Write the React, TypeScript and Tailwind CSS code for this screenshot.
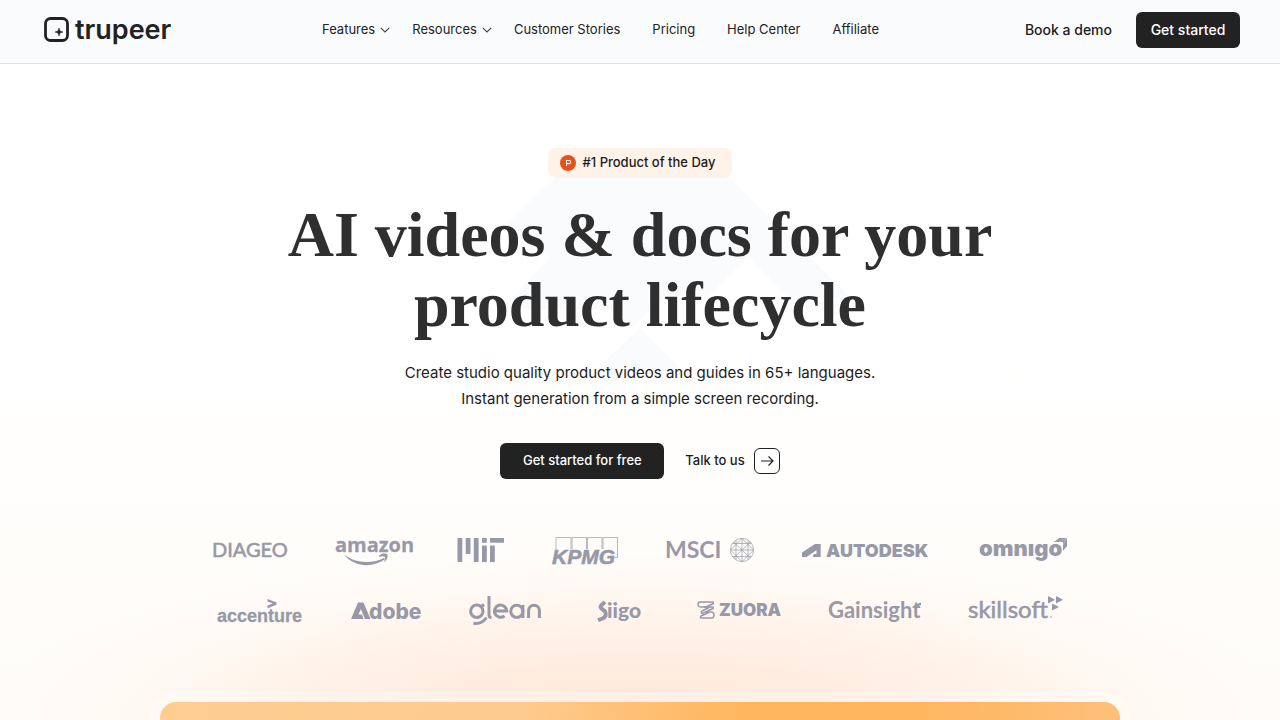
import React from 'react';

interface NavItem {
  label: string;
  hasMenu?: boolean;
}

const menuItems: NavItem[] = [
  { label: 'Features', hasMenu: true },
  { label: 'Resources', hasMenu: true },
  { label: 'Customer Stories' },
];

const linkItems: NavItem[] = [
  { label: 'Pricing' },
  { label: 'Help Center' },
  { label: 'Affiliate' },
];

const Chevron = () => (
  <svg width="10" height="6" viewBox="0 0 10 6" fill="none" stroke="#444" strokeWidth="1.1" aria-hidden="true">
    <path d="M0.8 0.8 L5 5 L9.2 0.8" />
  </svg>
);

const Header = () => (
  <header className="relative z-10 flex h-16 items-center border-b border-[#e0e2e6] bg-[#fafbfd] px-10 pb-1">
    <a href="#" className="ml-1 flex w-[278px] shrink-0 items-center gap-[6px]" aria-label="trupeer home">
      <svg width="25" height="25" viewBox="0 0 25 25" fill="none" aria-hidden="true">
        <rect x="1.5" y="1.5" width="22" height="22" rx="5" stroke="#222" strokeWidth="2.8" />
        <path d="M15 11 L16 14 L19 15 L16 16 L15 19 L14 16 L11 15 L14 14 Z" fill="#222" stroke="#222" strokeWidth="0.5" />
      </svg>
      <span className="text-[27px] leading-8 font-semibold text-[#222]">trupeer</span>
    </a>

    <nav className="flex items-center gap-8 text-[13px] whitespace-nowrap text-[#222]">
      <div className="flex items-center gap-[22px]">
        {menuItems.map((item) => (
          <a key={item.label} href="#" className="flex items-center gap-[5px]">
            {item.label}
            {item.hasMenu && <Chevron />}
          </a>
        ))}
      </div>
      {linkItems.map((item) => (
        <a key={item.label} href="#">{item.label}</a>
      ))}
    </nav>

    <div className="ml-auto flex items-center gap-6 text-[14px] font-medium">
      <a href="#" className="whitespace-nowrap text-[#1c1c1c]">Book a demo</a>
      <button className="h-9 w-[104px] rounded-md bg-[#222] text-white">Get started</button>
    </div>
  </header>
);

/* --- Logos --- */

const Logo = ({ name, width, children }: { name: string; width: number; children: React.ReactNode }) => (
  <svg
    width={width}
    height="34"
    viewBox={`0 0 ${width} 34`}
    className="shrink-0 overflow-visible"
    fill="#9799a8"
    role="img"
    aria-label={name}
  >
    {children}
  </svg>
);

const Diageo = () => (
  <Logo name="Diageo" width={75}>
    <text x="-1" y="24" fontFamily="Lato" fontSize="20" fontWeight="400" stroke="#9799a8" strokeWidth="0.6">DIAGEO</text>
  </Logo>
);

const Amazon = () => (
  <Logo name="Amazon" width={73}>
    <text x="-1" y="19" fontFamily="Open Sans" fontSize="20" fontWeight="700" stroke="#9799a8" strokeWidth="0.3">amazon</text>
    <path d="M8 21.5 C20 31 37 30.5 48 25 L49 26.3 C37 35 18 34.5 8 21.5 Z" />
    <path d="M43 22.5 C46 20 50 20 51.5 21.2 C52 24.5 50.5 27.5 48 29.5 C48.8 27 49.5 25 49 24 C48 23 45.5 23.2 43 23.8 Z" />
  </Logo>
);

const Mit = () => (
  <Logo name="MIT" width={47}>
    <path d="M0.5 5h4.8v24H0.5zM8.7 5h4.8v16H8.7zM16.8 5h4.8v24h-4.8zM25 5h4.8v4.8H25zM25 12.5h4.8V29H25zM33 12.5h4.8V29H33zM33 5h14v4.8H33z" />
  </Logo>
);

const Kpmg = () => (
  <Logo name="KPMG" width={66}>
    <g fill="none" stroke="#9799a8" strokeWidth="0.7">
      <path d="M4 23 V4.5 H19 V16 M20 16 V4.5 H34.5 V16 M35.5 16 V4.5 H50 V16 M51 16 V4.5 H65.5 V24.5 H63" />
    </g>
    <text x="0" y="30.5" fontFamily="Liberation Sans" fontSize="21" fontWeight="700" fontStyle="italic" stroke="#9799a8" strokeWidth="0.6">KPMG</text>
  </Logo>
);

const Msci = () => (
  <Logo name="MSCI" width={88}>
    <text x="-1" y="25" fontFamily="Lato" fontSize="23" fontWeight="700">MSCI</text>
    <g fill="none" stroke="#9799a8" strokeWidth="0.7">
      <circle cx="76" cy="17" r="11.6" />
      <path d="M76 5.4V28.6M64.4 17H87.6M70 7.5V26.5M82 7.5V26.5M66.5 10.5H85.5M66.5 23.5H85.5" />
      <path d="M67.6 9 L84.4 25M84.4 9 L67.6 25M76 5.4 L64.4 17 L76 28.6 L87.6 17Z" />
    </g>
  </Logo>
);

const Autodesk = () => (
  <Logo name="Autodesk" width={130}>
    <path d="M0 24 V19.5 L13 11 H18.7 V24 H10.5 L12 21 H14.5 V17.2 L4.5 24 Z" />
    <text x="24" y="24" fontFamily="Inter" fontSize="18" fontWeight="900">AUTODESK</text>
  </Logo>
);

const Omnigo = () => (
  <Logo name="Omnigo" width={87}>
    <text x="-1" y="23" fontFamily="Inter" fontSize="22" fontWeight="900">omnıgo</text>
    <path d="M74 9 L79 5 H87 V13 L83 18 V9 Z" />
    <path d="M79 9 L87 5 L83 12" fill="none" stroke="#fffdf9" strokeWidth="0.3" />
  </Logo>
);

const Accenture = () => (
  <Logo name="Accenture" width={86}>
    <path d="M50.5 6 L59.5 9.6 V11.7 L50.5 15.2 V12.6 L56 10.6 L50.5 8.6 Z" />
    <text x="0" y="29" fontFamily="Liberation Sans" fontSize="18" fontWeight="700" stroke="#9799a8" strokeWidth="0.3">accenture</text>
  </Logo>
);

const Adobe = () => (
  <Logo name="Adobe" width={70}>
    <path d="M0 26 L7 9.5 H12.5 L19.5 26 H14 L9.8 16 L7.5 21.5 H11 L12.5 26 Z" />
    <text x="18" y="26" fontFamily="Inter" fontSize="21" fontWeight="800">dobe</text>
  </Logo>
);

const Glean = () => (
  <Logo name="Glean" width={72}>
    <g fill="none" stroke="#9799a8" strokeWidth="3">
      <circle cx="7.8" cy="18.3" r="6.2" />
      <path d="M12 14 L15 11.5M4.5 30.3 C10 31.3 14.5 29 17.5 24.5M20 3 V22 Q20 24.5 22.5 24.5" />
      <path d="M25.5 18 H37.6 A6.1 6.1 0 1 0 35.5 22.8" />
      <circle cx="47.8" cy="18.3" r="6.1" />
      <path d="M53.9 12 V25M59.6 25 V17.6 A5.4 5.4 0 0 1 70.4 17.6 V25" />
    </g>
  </Logo>
);

const Siigo = () => (
  <Logo name="Siigo" width={60}>
    <path d="M16 9 L12 12.6 Q11 14 12.5 15.5 L16 18.4 Q18.5 23 13.5 25.5 L9 27.2" fill="none" stroke="#9799a8" strokeWidth="4" strokeLinejoin="round" />
    <text x="18" y="25" fontFamily="Lato" fontSize="21" fontWeight="900">iigo</text>
  </Logo>
);

const Zuora = () => (
  <Logo name="Zuora" width={84}>
    <g fill="none" stroke="#9799a8" strokeWidth="1.4" strokeLinejoin="round">
      <path d="M3 9 H16 L16.5 10.5 L9 14 H3.5 Q1 14 1 11.5 Q1 9 3 9Z" />
      <path d="M7 14 H15 Q17 14 16 15.5 L5 20.5 Q3.5 19 5 18 L12 14.5" />
      <path d="M9 19 H14.5 Q17 19 17 22 Q17 25 14.5 25 H4 Q2.5 24.5 4 23 L12 19.5" />
    </g>
    <text x="22" y="23" fontFamily="Inter" fontSize="17" fontWeight="900">ZUORA</text>
  </Logo>
);

const Gainsight = () => (
  <Logo name="Gainsight" width={92}>
    <text x="-1" y="25" fontFamily="Lato" fontSize="22" fontWeight="700">Gainsight</text>
    <path d="M84 14 Q87 10.5 92 9.5 V12 Q88 12.8 86 15Z" />
  </Logo>
);

const Skillsoft = () => (
  <Logo name="Skillsoft" width={94}>
    <text x="-1" y="25" fontFamily="Lato" fontSize="24" fontWeight="400" stroke="#9799a8" strokeWidth="0.6">skillsoft</text>
    <path d="M79 3 L86 6.7 L79 10.5Z M87 3 L94 6.7 L87 10.5Z M83 10.5 L90 14 L83 17.5Z" />
    <circle cx="82" cy="24" r="0.8" />
  </Logo>
);

const Customers = () => (
  <section aria-label="Customers" className="mt-[54px] flex flex-col items-center gap-[26px]">
    <div className="flex items-center gap-12">
      <Diageo />
      <Amazon />
      <Mit />
      <Kpmg />
      <Msci />
      <Autodesk />
      <Omnigo />
    </div>
    <div className="flex items-center gap-12">
      <Accenture />
      <Adobe />
      <Glean />
      <Siigo />
      <Zuora />
      <Gainsight />
      <Skillsoft />
    </div>
  </section>
);

const Backdrop = () => (
  <svg
    width="380"
    height="210"
    viewBox="0 0 380 210"
    fill="#fafbfd"
    aria-hidden="true"
    className="absolute top-[106px] left-1/2 -ml-[160px]"
  >
    <path d="M75 8 H250 L370 127 H310 L268 86 L228 126 H184 L146 88 H130 L110 106 L90 88 H70 L28 55 Z" />
    <path d="M70 88 H90 L110 106 L130 88 H146 L184 127 L152 158 L130 140 H20 Z" />
    <path d="M160 158 L206 204 H112 Z" />
  </svg>
);

const Hero = () => (
  <section className="relative flex flex-col items-center text-center">
    <Backdrop />
    <div className="relative mt-[84px] flex h-[30px] items-center gap-[6px] rounded-lg bg-[#fff3e9] pr-4 pl-3 text-[13px] font-medium text-[#1c1c1c]">
      <svg width="16" height="16" viewBox="0 0 16 16" aria-hidden="true">
        <circle cx="8" cy="8" r="8" fill="#e8501c" />
        <path d="M6.5 11 V5.5 H9.3 Q10.6 5.5 10.6 7 Q10.6 8.6 9.3 8.6 H6.5" fill="none" stroke="#fff" strokeWidth="1.1" />
      </svg>
      #1 Product of the Day
    </div>

    <h1 className="relative mt-[22px] font-['Liberation_Serif',serif] text-[64px] leading-[70px] font-bold text-[#2f2f2f]">
      AI videos &amp; docs for your
      <br />
      product lifecycle
    </h1>

    <p className="relative mt-5 text-[15px] leading-[26px] text-[#1c1c1c]">
      Create studio quality product videos and guides in 65+ languages.
      <br />
      Instant generation from a simple screen recording.
    </p>

    <div className="relative mt-[31px] flex items-center gap-[21px] text-[13px] font-medium">
      <button className="h-9 w-[164px] rounded-md bg-[#222] text-white">Get started for free</button>
      <a href="#" className="flex items-center gap-[9px] text-[#1c1c1c]">
        Talk to us
        <span className="flex h-[26px] w-[26px] items-center justify-center rounded-md border border-[#222] bg-white">
          <svg width="14" height="12" viewBox="0 0 14 12" fill="none" stroke="#222" strokeWidth="1.2" aria-hidden="true">
            <path d="M1 6 H13 M8.5 1.5 L13 6 L8.5 10.5" />
          </svg>
        </span>
      </a>
    </div>
  </section>
);

export default function App() {
  return (
    <div className="flex min-h-screen flex-col overflow-hidden bg-[linear-gradient(to_bottom,#ffffff_50%,#fffdfa_78%,#fffcf8_100%)] font-[Inter,sans-serif]">
      <Header />
      <main className="flex flex-1 flex-col bg-[radial-gradient(ellipse_660px_170px_at_50%_100%,#ffe9dc_0%,#ffebdf_30%,#fff3ea_58%,#fff9f3_78%,#fffcf800_100%)]">
        <Hero />
        <Customers />
        <div className="mx-auto mt-[65px] flex w-full max-w-[980px] flex-1 flex-col rounded-t-3xl bg-white/30 px-[10px] pt-[10px]">
          <div className="min-h-[18px] flex-1 rounded-t-2xl bg-[linear-gradient(100deg,#fdcd91_0%,#fdcb8d_38%,#ffb65f_60%,#ffb65f_80%,#fdc07a_100%)]" />
        </div>
      </main>
    </div>
  );
}
